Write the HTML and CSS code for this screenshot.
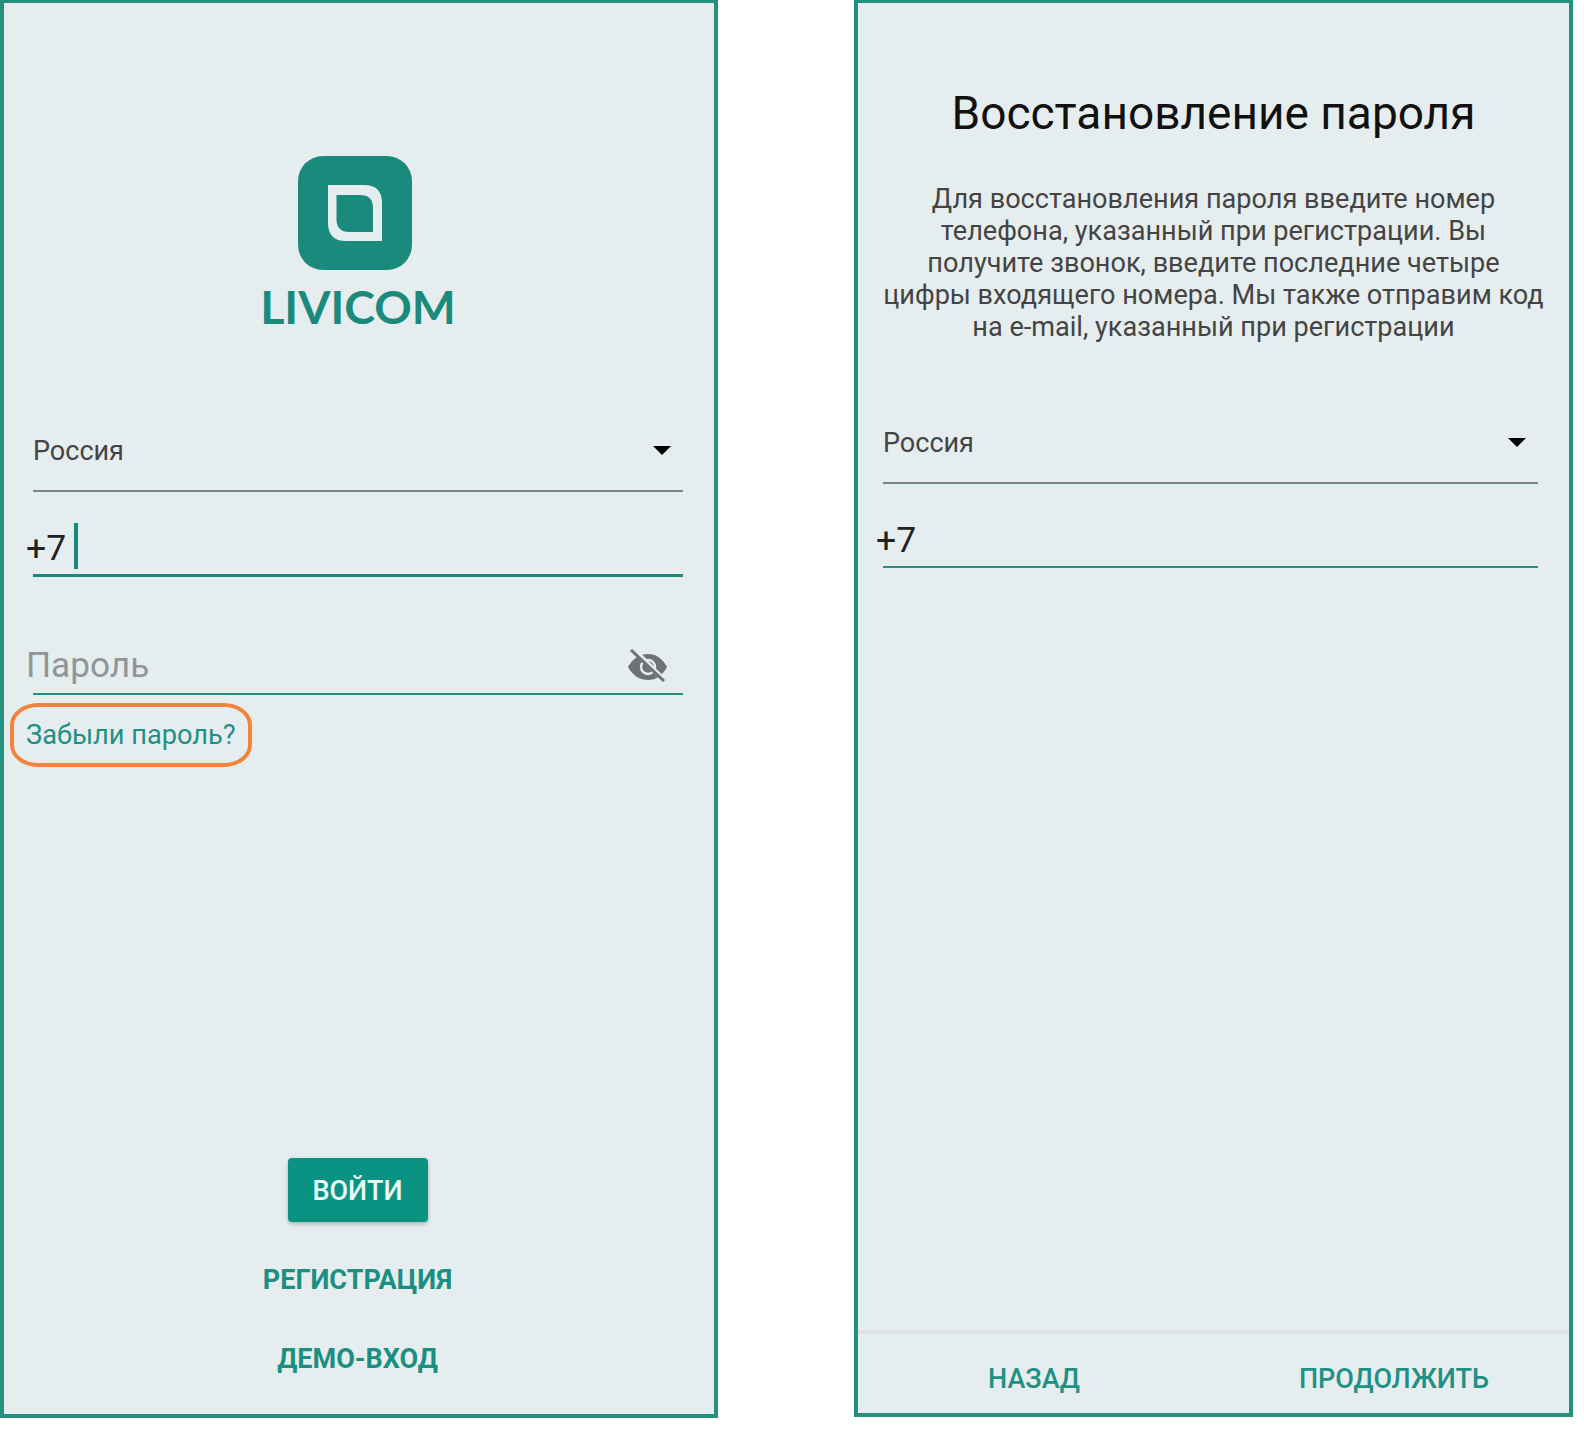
FILE: index.html
```html
<!DOCTYPE html>
<html lang="ru">
<head>
  <meta charset="UTF-8">
  <title>Livicom</title>
  <link rel="stylesheet" href="styles.css">
</head>
<body>
  <div class="screens">
    <section class="phone login">
      <div class="logo">
        <svg class="logo-icon" viewBox="0 0 114 114" width="114" height="114">
          <rect width="114" height="114" rx="25" fill="#1a8a7d"/>
          <path fill="#e6edee" fill-rule="evenodd" d="M30 29H66Q84 29 84 47V85H48Q30 85 30 67ZM38.500 39V63Q38.500 76 51.500 76H75V52Q75 39 62 39Z"/>
        </svg>
        <div class="logo-name">LIVICOM</div>
      </div>

      <div class="select">
        <span>Россия</span>
        <i class="arrow"></i>
      </div>
      <div class="phone-field active">
        <span class="code">+7</span>
        <i class="caret"></i>
      </div>
      <div class="password">
        <span class="placeholder">Пароль</span>
        <svg class="eye" viewBox="0 0 39 33" width="39" height="33">
          <path fill="#6d7374" d="M0 18C5 9 12 5 20 5C28 5 34 9 39 18C34 27 28 31 20 31C12 31 5 27 0 18Z"/>
          <circle cx="20" cy="18" r="7" fill="none" stroke="#e6edee" stroke-width="2.500"/>
          <path stroke="#e6edee" stroke-width="5" d="M6 1L36 31"/>
          <path stroke="#6d7374" stroke-width="3" d="M3 1L36 32"/>
        </svg>
      </div>
      <a class="forgot">Забыли пароль?</a>

      <div class="actions">
        <button class="btn-main">ВОЙТИ</button>
        <button class="btn-link register">РЕГИСТРАЦИЯ</button>
        <button class="btn-link demo">ДЕМО-ВХОД</button>
      </div>
    </section>

    <section class="phone restore">
      <h1>Восстановление пароля</h1>
      <p class="hint">Для восстановления пароля введите номер телефона, указанный при регистрации. Вы получите звонок, введите последние четыре цифры входящего номера. Мы также отправим код на e&#8209;mail, указанный при регистрации</p>
      <div class="select">
        <span>Россия</span>
        <i class="arrow"></i>
      </div>
      <div class="phone-field">
        <span class="code">+7</span>
      </div>
      <div class="footer">
        <button class="btn-foot back">НАЗАД</button>
        <button class="btn-foot next">ПРОДОЛЖИТЬ</button>
      </div>
    </section>
  </div>
</body>
</html>
```
FILE: styles.css
```css
body {margin: 0; background: #fff; font-family: Roboto, "Noto Sans", sans-serif; color: #222;}
button {border: 0; background: none; font-family: inherit; padding: 0; cursor: pointer;}
.screens {display: flex; gap: 136px; align-items: flex-start;}

.phone {box-sizing: border-box; width: 718px; height: 1418px; border: 4px solid #24917f; border-top-width: 3px; background: #e6edee; display: flex; flex-direction: column;}
.restore {width: 719px; height: 1417px;}

/* logo */
.logo {display: flex; flex-direction: column; align-items: center; padding-top: 153px;}
.logo-icon {display: block; margin-right: 8px;}
.logo-name {margin: 10px 2px 0 0; font: 700 46.500px/52px Lato, sans-serif; color: #1a8a7d;}

/* fields */
.select {display: flex; justify-content: space-between; align-items: center; height: 75px; padding-bottom: 2px; margin: 0 31px 0 29px; border-bottom: 2px solid #6f8a8a; font-size: 27px; color: #444;}
.login .select {margin-top: 81px;}
.arrow {width: 0; height: 0; margin-right: 12px; border: 9px solid transparent; border-top: 9px solid #000; border-bottom: 0;}
.phone-field {display: flex; align-items: flex-end; height: 82px; margin: 0 31px 0 29px; border-bottom: 2px solid #24917f;}
.phone-field.active {border-bottom-width: 3px; border-color: #1a8a7d;}
.code {margin: 0 0 4px -7px; font-size: 35.500px; line-height: 44px; color: #222;}
.caret {width: 4px; height: 46px; margin: 0 0 5px 8px; background: #1a8a80;}
.password {display: flex; justify-content: space-between; align-items: flex-end; height: 70px; margin: 46px 31px 0 29px; border-bottom: 2px solid #24917f;}
.placeholder {margin: 0 0 6px -7px; font-size: 35.200px; line-height: 44px; color: #909597;}
.eye {margin: 0 16px 11px 0;}
.forgot {align-self: flex-start; margin: 8px 0 0 6px; padding: 0 12px; height: 56px; line-height: 56px; border: 4px solid #f0843c; border-radius: 28px / 22px; font-size: 27.200px; color: #1f9085;}

/* left buttons */
.actions {margin-top: auto; height: 256px; padding-right: 3px; display: flex; flex-direction: column; align-items: center;}
.btn-main {width: 140px; height: 64px; padding-top: 2px; border-radius: 4px; background: #0a9383; color: #eafaf7; font-size: 27px; font-weight: 500; box-shadow: 0 2px 4px rgba(0,0,0,.25);}
.btn-link {color: #1a8f82; font-size: 27px; font-weight: 700; line-height: 32px;}
.register {margin-top: 42px;}
.demo {margin-top: 47px;}

/* right screen */
h1 {margin: 83px 0 0; text-align: center; font-size: 46px; font-weight: 400; line-height: 54px; color: #111;}
.hint {margin: 43px 0 0; padding: 0 24px; text-align: center; font-size: 27.100px; line-height: 32px; color: #444;}
.restore .select {margin-top: 62px; margin-left: 25px; margin-right: 31px;}
.restore .phone-field {margin-left: 25px; margin-right: 31px;}
.footer {margin-top: auto; box-sizing: border-box; height: 83px; padding-top: 10px; border-top: 4px solid #dfe2e2; display: flex; justify-content: space-between; align-items: center;}
.btn-foot {color: #1f9085; font-size: 27px; font-weight: 500;}
.back {margin-left: 130px;}
.next {margin-right: 80px;}
```
